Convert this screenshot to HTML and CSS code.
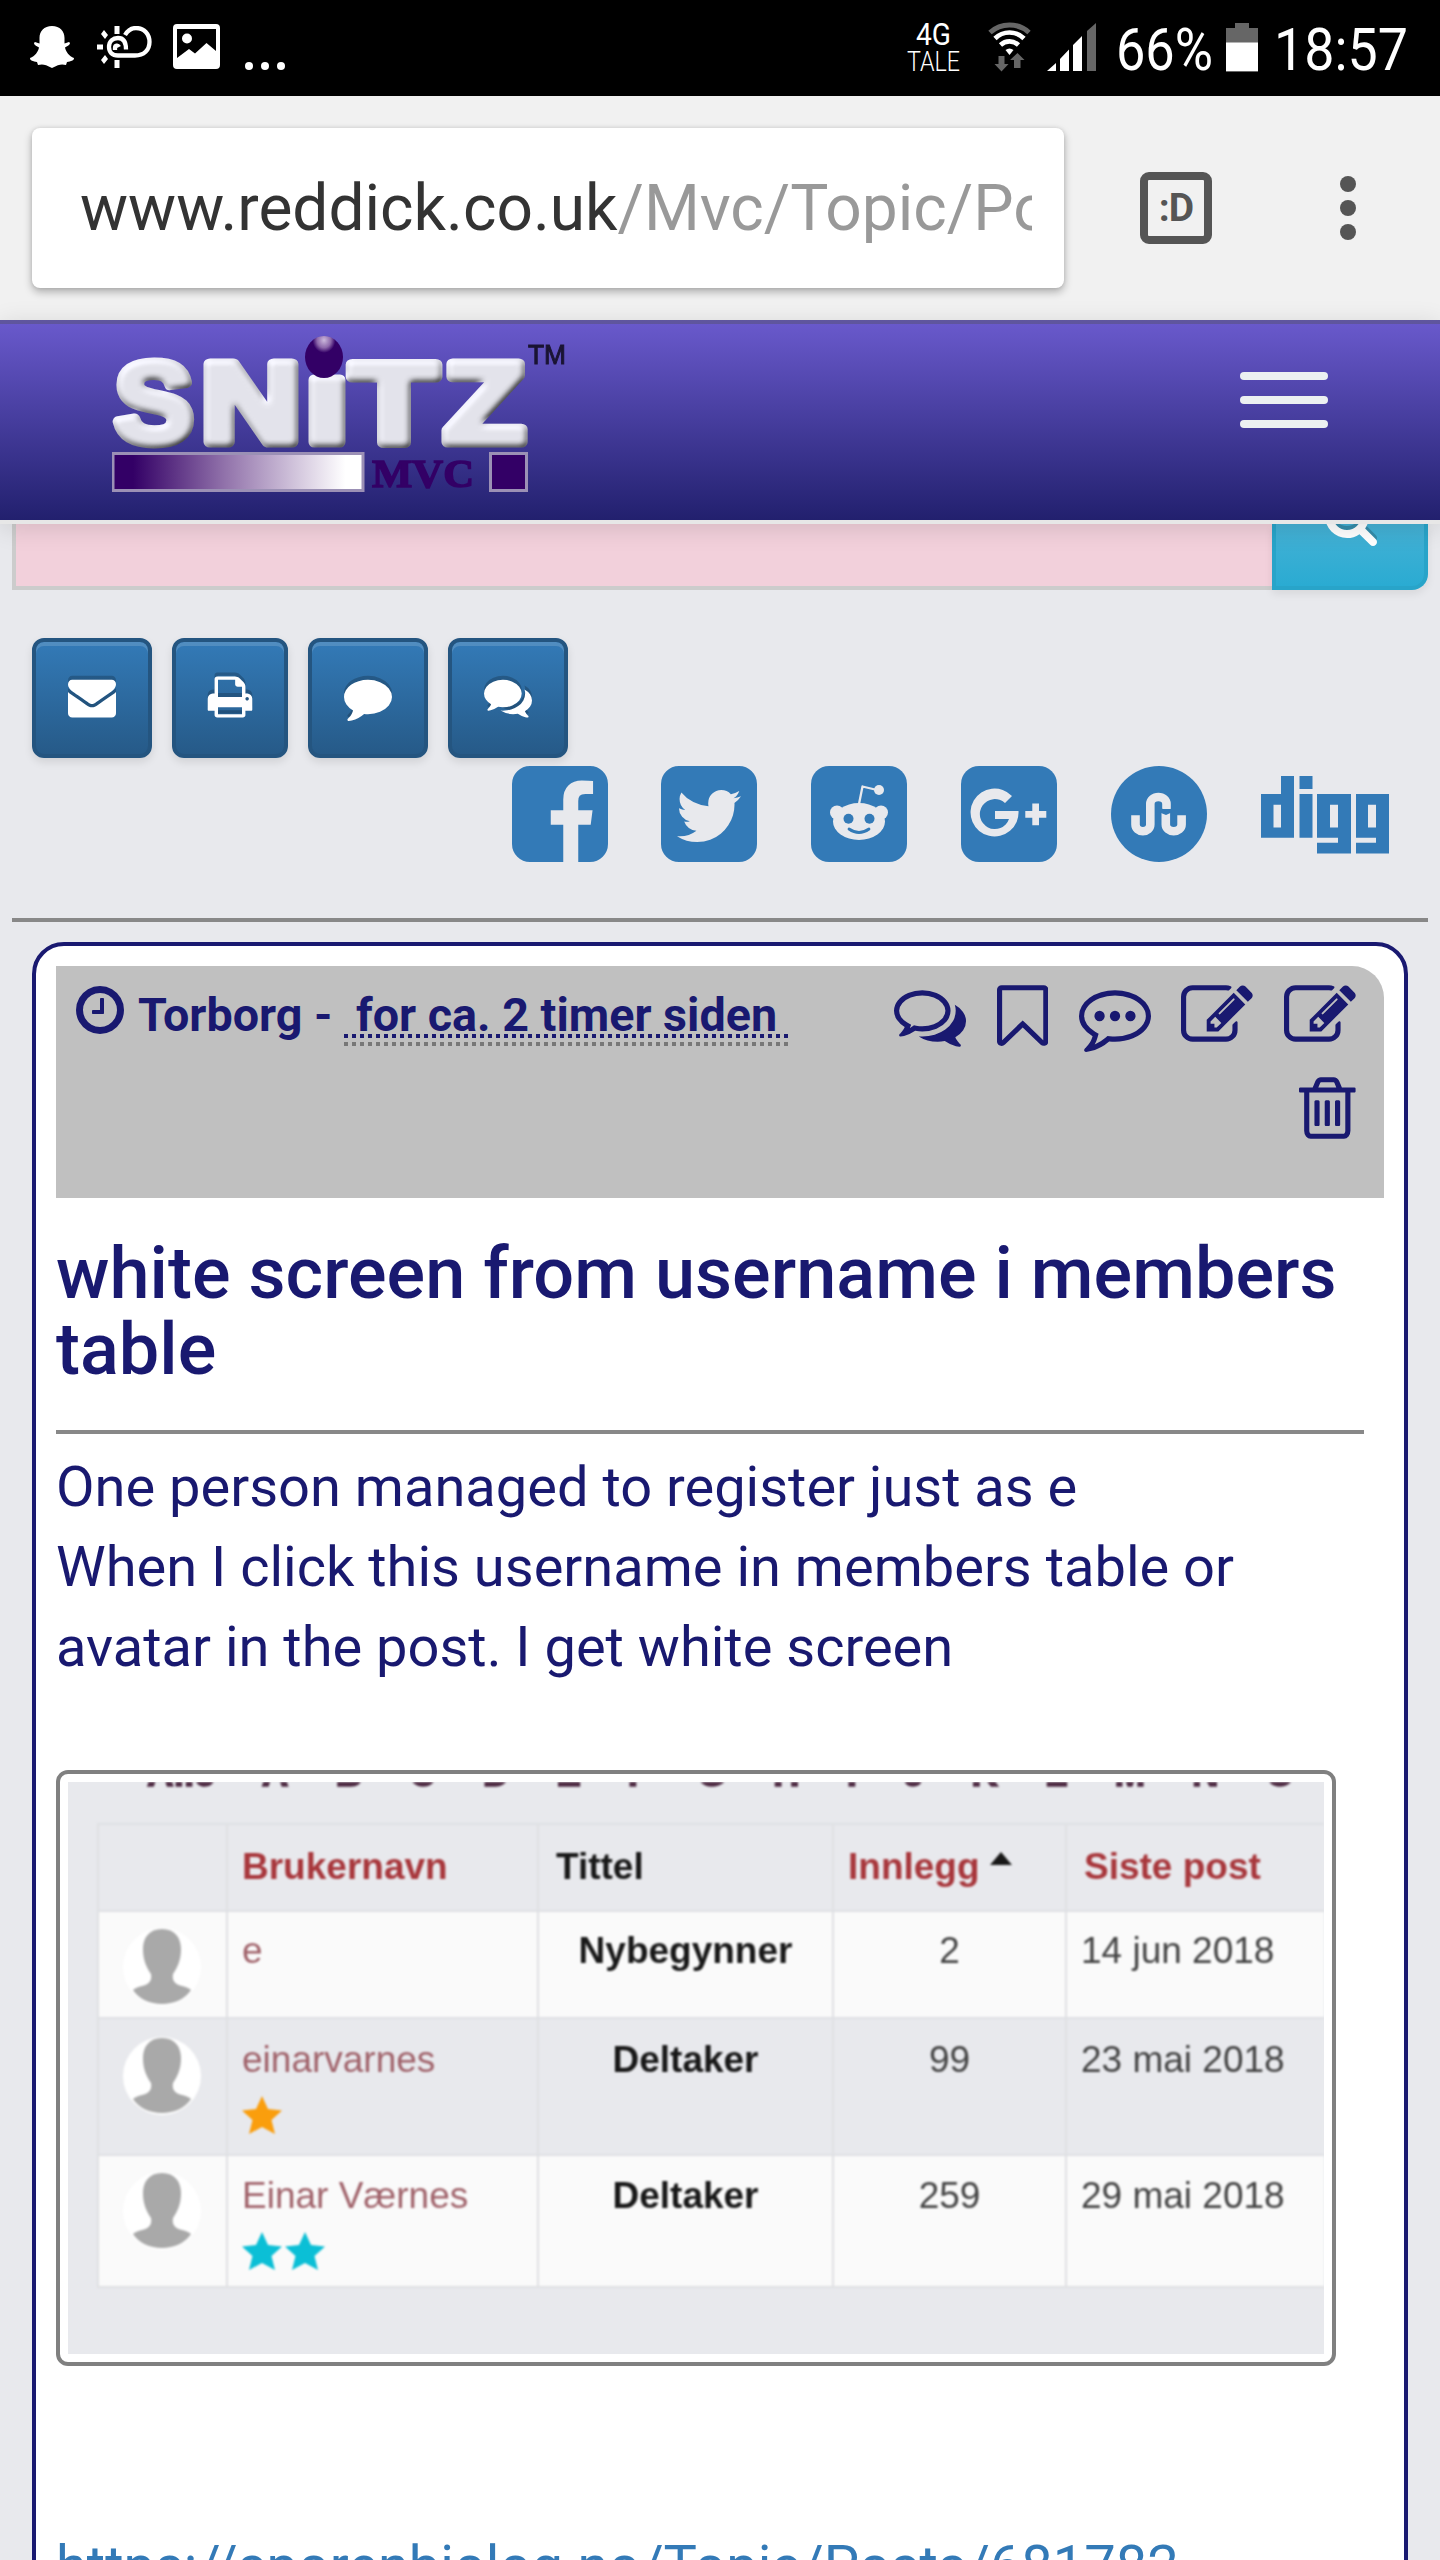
FILE: index.html
```html
<!DOCTYPE html>
<html lang="no">
<head>
<meta charset="utf-8">
<title>Snitz MVC</title>
<link rel="stylesheet" href="styles.css">
</head>
<body>
<div class="status">
  <svg class="st-ghost" viewBox="0 0 44 42" fill="#fff"><path d="M22 0C30 0 34.500 5 34.500 12V17.500L39 16C41 17 40 19 35 21.500C36 26 39 30 44 32C44 35 41 35 37 36L36 39C32 38 29 38 22 42C15 38 12 38 8 39L7 36C3 35 0 35 0 32C5 30 8 26 9 21.500C4 19 3 17 5 16L9.500 17.500V12C9.500 5 14 0 22 0Z"/></svg>
  <svg class="st-weather" viewBox="0 0 55 42"><path d="M28 9C31 4 35 2 39 2C47 2 52.500 8 52.500 16C52.500 24 47 29.500 38 29.500H21C15 29.500 12 26 12 21C12 15 16 12 21 12C26 12 29 16 29 23.500M18 24V22C18 19 21 19 22 21" fill="none" stroke="#fff" stroke-width="4.300"/><path fill="#fff" d="M17.500 0h5v8h-5zM0 18.500h6v5H0zM17.500 34h5v8h-5zM4 8l3-4 4 5-3 4zM4 34l4-5 3 4-4 5z"/></svg>
  <svg class="st-picture" viewBox="0 0 47 45"><path fill="#fff" fill-rule="evenodd" d="M4 0H43Q47 0 47 4V41Q47 45 43 45H4Q0 45 0 41V4Q0 0 4 0ZM4 5V34L16 25L22 29.500L33.500 19L43 27V5Z"/><circle cx="14" cy="14.500" r="5" fill="#fff"/></svg>
  <svg class="st-more" viewBox="0 0 40 8" fill="#fff"><circle cx="4" cy="4" r="4"/><circle cx="20" cy="4" r="4"/><circle cx="36" cy="4" r="4"/></svg>
  <svg class="st-net" viewBox="0 0 54 52" fill="#fff"><text x="9" y="23.500" font-size="31" textLength="35" lengthAdjust="spacingAndGlyphs">4G</text><text x="0" y="50" font-size="27" font-weight="300" textLength="53" lengthAdjust="spacingAndGlyphs">TALE</text></svg>
  <svg class="st-wifi" viewBox="0 0 43 49" fill="none"><path d="M2 10.500A29 29 0 0 1 41 10.500" stroke="#666" stroke-width="5"/><path d="M7 16.500A20.500 20.500 0 0 1 36 16.500M12.500 23A13 13 0 0 1 30.500 23" stroke="#fff" stroke-width="4.600"/><path d="M17.500 28Q21.500 25 25.500 28L21.500 33Z" fill="#fff"/><path fill="#666" d="M10.500 34h6v8h4L13.500 49.500 6.500 42h4zM26 46v-8h-4L29.500 31 36.500 38h-4v8z"/></svg>
  <svg class="st-signal" viewBox="0 0 49 48"><path fill="#fff" d="M0 48L9 40V48ZM13 48V36L22 26.500V48ZM26 48V22L35 13V48Z"/><path fill="#666" d="M40 48V8L49 0V48Z"/></svg>
  <svg class="st-pct" viewBox="0 0 94 52" fill="#fff"><text x="-2" y="47" font-size="60" textLength="97" lengthAdjust="spacingAndGlyphs">66%</text></svg>
  <svg class="st-batt" viewBox="0 0 32 49"><path fill="#666" d="M9 0H23V5H32V49H0V5H9Z"/><path fill="#fff" d="M0 19.500H32V48H0Z"/></svg>
  <svg class="st-time" viewBox="0 0 132 52" fill="#fff"><text x="-3" y="47" font-size="60" textLength="134" lengthAdjust="spacingAndGlyphs">18:57</text></svg>
</div>
<div class="browser">
  <div class="url"><div class="url-text">www.reddick.co.uk<span>/Mvc/Topic/Posts</span></div></div>
  <div class="tabs">:D</div>
  <div class="dots"><i></i><i></i><i></i></div>
</div>
<header class="navbar">
  <svg class="logo" viewBox="0 0 456 160">
    <defs>
      <linearGradient id="fade"><stop offset="0" stop-color="#330066"/><stop offset=".08" stop-color="#330066"/><stop offset=".45" stop-color="#9273ab"/><stop offset=".93" stop-color="#fff"/></linearGradient>
      <radialGradient id="ball" cx=".5" cy=".1" r=".6"><stop offset="0" stop-color="#cbb8dc"/><stop offset=".3" stop-color="#8d68ab"/><stop offset=".5" stop-color="#330066"/></radialGradient>
      <filter id="bevel" x="-5%" y="-5%" width="110%" height="115%"><feGaussianBlur in="SourceAlpha" stdDeviation="3" result="b"/><feDiffuseLighting in="b" surfaceScale="5" diffuseConstant="1.120" lighting-color="#ececf4" result="d"><feDistantLight azimuth="240" elevation="55"/></feDiffuseLighting><feComposite in="d" in2="SourceAlpha" operator="in"/></filter>
    </defs>
    <g class="letters" fill="#fff" stroke="#fff" stroke-width="11" stroke-linejoin="round" filter="url(#bevel)">
      <text x="3" y="106" font-size="113" textLength="78" lengthAdjust="spacingAndGlyphs">S</text>
      <text x="89" y="106" font-size="113" textLength="100" lengthAdjust="spacingAndGlyphs">N</text>
      <path d="M202 44H228V106H202Z"/>
      <text x="239" y="106" font-size="113" textLength="86" lengthAdjust="spacingAndGlyphs">T</text>
      <text x="332" y="106" font-size="113" textLength="81" lengthAdjust="spacingAndGlyphs">Z</text>
    </g>
    <ellipse cx="212" cy="21" rx="19" ry="21" fill="url(#ball)"/>
    <rect x="1" y="117.500" width="250" height="37" fill="url(#fade)" stroke="#9b90b5" stroke-width="3"/>
    <text class="mvc" x="260" y="151" font-size="41" textLength="102" lengthAdjust="spacingAndGlyphs">MVC</text>
    <rect x="378.500" y="117.500" width="36" height="37" fill="#330066" stroke="#9b90b5" stroke-width="3"/>
    <text x="416" y="28" font-size="28" textLength="38" lengthAdjust="spacingAndGlyphs" fill="#1a1433" stroke="#1a1433">TM</text>
  </svg>
  <div class="burger"><i></i><i></i><i></i></div>
</header>
<main>
  <div class="search">
    <div class="field"></div>
    <div class="go"><svg viewBox="64 128 1664 1664"><path fill="#fff" d="M1216 832q0-185-131.500-316.500t-316.500-131.500-316.500 131.500-131.500 316.500 131.500 316.500 316.500 131.500 316.500-131.500 131.500-316.500zm512 832q0 52-38 90t-90 38q-54 0-90-38l-343-342q-179 124-399 124-143 0-273.500-55.500t-225-150-150-225-55.500-273.500 55.500-273.500 150-225 225-150 273.500-55.500 273.500 55.500 225 150 150 225 55.500 273.500q0 220-124 399l343 343q37 37 37 90z"/></svg></div>
  </div>
  <div class="tools">
    <div class="btn"><svg viewBox="0 0 1792 1792"><path d="M1792 710v794q0 66-47 113t-113 47h-1472q-66 0-113-47t-47-113v-794q44 49 101 87 362 246 497 345 57 42 92.500 65.500t94.500 48 110 24.500h2q51 0 110-24.500t94.500-48 92.500-65.500q170-123 498-345 57-39 100-87zm0-294q0 79-49 151t-122 123q-376 261-468 325-10 7-42.500 31t-54 38.500-52 32.500-57.500 27-50 9h-2q-23 0-50-9t-57.500-27-52-32.500-54-38.500-42.500-31q-91-64-262-182.500t-205-142.500q-62-42-117-115.500t-55-136.500q0-78 41.500-130t118.500-52h1472q65 0 112.500 47t47.500 113z"/></svg></div>
    <div class="btn narrow"><svg viewBox="0 0 1792 1792"><path d="M448 1536h896v-256h-896v256zm0-640h896v-384h-160q-40 0-68-28t-28-68v-160h-640v640zm1152 64q0-26-19-45t-45-19-45 19-19 45 19 45 45 19 45-19 19-45zm128 0v416q0 13-9.500 22.500t-22.500 9.500h-224v160q0 40-28 68t-68 28h-960q-40 0-68-28t-28-68v-160h-224q-13 0-22.500-9.500t-9.500-22.500v-416q0-79 56.500-135.500t135.500-56.500h64v-544q0-40 28-68t68-28h672q40 0 88 20t76 48l152 152q28 28 48 76t20 88v256h64q79 0 135.500 56.500t56.500 135.500z"/></svg></div>
    <div class="btn"><svg viewBox="0 0 1792 1792"><path d="M1792 896q0 174-120 321.500t-326 233-450 85.500q-70 0-145-8-198 175-460 242-49 14-114 22-17 2-30.500-9t-17.500-29v-1q-3-4-.5-12t2-10 4.500-9.500l6-9 7-8.500 8-9q7-8 31-34.500t34.500-38 31-39.500 32.500-51 27-59 26-76q-157-89-247.500-220t-90.500-281q0-130 71-248.500t191-204.500 286-136.500 348-50.500q244 0 450 85.500t326 233 120 321.500z"/></svg></div>
    <div class="btn"><svg viewBox="0 0 1792 1792"><path d="M1408 768q0 139-94 257t-256.500 186.500-353.500 68.500q-86 0-176-16-124 88-278 128-36 9-86 16h-3q-11 0-20.500-8t-11.500-21q-1-3-1-6.500t.5-6.500 2-6l2.500-5 3.500-5.500 4-5 4.500-5 4-4.500q5-6 23-25t26-29.500 22.500-29 25-38.500 20.500-44q-124-72-195-177t-71-224q0-139 94-257t256.500-186.500 353.500-68.500 353.500 68.500 256.500 186.500 94 257zm384 256q0 120-71 224.500t-195 176.500q10 24 20.500 44t25 38.500 22.500 29 26 29.500 23 25q1 1 4 4.500t4.500 5 4 5 3.500 5.500l2.500 5 2 6 .5 6.500-1 6.500q-3 14-13 22t-22 7q-50-7-86-16-154-40-278-128-90 16-176 16-271 0-472-132 58 4 88 4 161 0 309-45t264-129q125-92 192-212t67-254q0-77-23-152 129 71 204 178t75 230z"/></svg></div>
  </div>
  <div class="social">
    <svg viewBox="128 128 1536 1536"><path d="M1376 128q119 0 203.500 84.500t84.500 203.500v960q0 119-84.500 203.500t-203.500 84.500h-188v-595h199l30-232h-229v-148q0-56 23.500-84t91.500-28l122-1v-207q-63-9-178-9-136 0-217.500 80t-81.500 226v171h-200v232h200v595h-532q-119 0-203.500-84.500t-84.500-203.500v-960q0-119 84.500-203.500t203.500-84.500h960z"/></svg>
    <svg viewBox="128 128 1536 1536"><path d="M1408 610q-56 25-121 34 68-40 93-117-65 38-134 51-61-66-153-66-87 0-148.500 61.500t-61.500 148.500q0 29 5 48-129-7-242-65t-192-155q-29 50-29 106 0 114 91 175-47-1-100-26v2q0 75 50 133.500t123 72.500q-29 8-51 8-13 0-39-4 21 63 74.500 104t121.500 42q-116 90-261 90-26 0-50-3 148 94 322 94 112 0 210-35.500t168-95 120.500-137 75-162 24.500-168.500q0-18-1-27 63-45 105-109zm256-194v960q0 119-84.500 203.500t-203.500 84.500h-960q-119 0-203.500-84.500t-84.500-203.500v-960q0-119 84.500-203.500t203.500-84.500h960q119 0 203.500 84.500t84.500 203.500z"/></svg>
    <svg viewBox="0 0 96 96"><rect width="96" height="96" rx="18"/><g class="cut"><ellipse cx="48" cy="55.500" rx="26" ry="18.500"/><circle cx="26" cy="46.500" r="7"/><circle cx="70" cy="46.500" r="7"/><circle cx="68" cy="24" r="5"/></g><path d="M48 38L51.500 20.500L66 24" fill="none" stroke="#e8e9ed" stroke-width="2.300" stroke-linejoin="round"/><circle cx="37.500" cy="52.700" r="5"/><circle cx="58.500" cy="52.700" r="5"/><path d="M38 63Q48 70 58 63" fill="none" stroke="#337ab7" stroke-width="2.800" stroke-linecap="round"/></svg>
    <svg viewBox="0 0 96 96"><rect width="96" height="96" rx="18"/><path class="cut" d="M51 30L44 37A15 15 0 1 0 48 53H34V45H57.500A24 24 0 1 1 51 30ZM71.300 37.500h6.700v7.500h7.300v6.700h-7.300v7.500h-6.700v-7.500h-7v-6.700h7z"/></svg>
    <svg viewBox="0 0 96 96"><circle cx="48" cy="48" r="48"/><path d="M24.500 49.300V58.500a7.400 6.700 0 0 0 14.800 0V38a8.100 7 0 0 1 16.200 0V43M54.800 46V58.500a7.900 6.700 0 0 0 15.800 0V49.300" fill="none" stroke="#e8e9ed" stroke-width="8.600"/><path d="M50 42l5.500 3 5-2.500v4l-5.500 2.500-5-2z"/></svg>
    <svg class="digg" viewBox="0 0 128 78"><path fill-rule="evenodd" d="M20 0H33V61.700H0V18H20ZM12.500 28.700V51.500H20V28.700ZM38.500 0h13v13h-13zM38.500 18h13v43.700h-13zM56 18H90V77.500H56V66.700H77V61.700H56ZM69 28.700V51.500H77V28.700ZM95 18H128V77.500H95V66.700H115V61.700H95ZM107 28.700V51.500H115V28.700Z"/></svg>
  </div>
  <hr class="rule">
  <article class="post">
    <div class="post-head">
      <div class="meta">
        <svg viewBox="128 128 1536 1536"><path d="M1024 544v448q0 14-9 23t-23 9h-320q-14 0-23-9t-9-23v-64q0-14 9-23t23-9h224v-352q0-14 9-23t23-9h64q14 0 23 9t9 23zm416 352q0-148-73-273t-198-198-273-73-273 73-198 198-73 273 73 273 198 198 273 73 273-73 198-198 73-273zm224 0q0 209-103 385.500t-279.500 279.500-385.500 103-385.500-103-279.500-279.500-103-385.500 103-385.500 279.500-279.500 385.500-103 385.500 103 279.500 279.500 103 385.500z"/></svg>
        <b class="author">Torborg -</b><b class="ago">for ca. 2 timer siden</b>
      </div>
      <div class="acts">
        <svg viewBox="0 0 1792 1792"><path d="M704 384q-153 0-286 52t-211.500 141-78.500 191q0 82 53 158t149 132l97 56-35 84q34-20 62-39l44-31 53 10q78 14 153 14 153 0 286-52t211.500-141 78.500-191-78.500-191-211.500-141-286-52zm0-128q191 0 353.500 68.500t256.500 186.500 94 257-94 257-256.500 186.500-353.500 68.500q-86 0-176-16-124 88-278 128-36 9-86 16h-3q-11 0-20.500-8t-11.500-21q-1-3-1-6.500t.5-6.500 2-6l2.500-5 3.500-5.500 4-5 4.500-5 4-4.500q5-6 23-25t26-29.500 22.500-29 25-38.500 20.500-44q-124-72-195-177t-71-224q0-139 94-257t256.500-186.500 353.500-68.500zm822 1169q10 24 20.500 44t25 38.500 22.500 29 26 29.500 23 25q1 1 4 4.500t4.500 5 4 5 3.500 5.500l2.500 5 2 6 .5 6.500-1 6.500q-3 14-13 22t-22 7q-50-7-86-16-154-40-278-128-90 16-176 16-271 0-472-132 58 4 88 4 161 0 309-45t264-129q125-92 192-212t67-254q0-77-23-152 129 71 204 178t75 230q0 120-71 224.500t-195 176.500z"/></svg>
        <svg class="w-mark" viewBox="256 0 1280 1792"><path d="M1408 256h-1024v1242l423-406 89-85 89 85 423 406v-1242zm12-128q23 0 44 9 33 13 52.500 41t19.500 62v1289q0 34-19.500 62t-52.500 41q-19 8-44 8-48 0-83-32l-441-424-441 424q-36 33-83 33-23 0-44-9-33-13-52.500-41t-19.500-62v-1289q0-34 19.500-62t52.500-41q21-9 44-9h1048z"/></svg>
        <svg viewBox="0 0 1792 1792"><path d="M640 896q0 53-37.500 90.500t-90.500 37.500-90.500-37.500-37.500-90.500 37.500-90.500 90.500-37.500 90.500 37.500 37.500 90.500zm384 0q0 53-37.500 90.500t-90.500 37.500-90.500-37.500-37.500-90.500 37.500-90.500 90.500-37.500 90.500 37.500 37.500 90.500zm384 0q0 53-37.500 90.500t-90.500 37.500-90.500-37.500-37.500-90.500 37.500-90.500 90.500-37.500 90.500 37.500 37.500 90.500zm-512-512q-204 0-381.500 69.500t-282 187.500-104.500 255q0 112 71.500 213.500t201.500 175.500l87 50-27 96q-24 91-70 172 152-63 275-171l43-38 57 6q69 8 130 8 204 0 381.500-69.500t282-187.500 104.500-255-104.500-255-282-187.500-381.500-69.500zm896 512q0 174-120 321.500t-326 233-450 85.500q-70 0-145-8-198 175-460 242-49 14-114 22h-5q-15 0-27-10.500t-16-27.500v-1q-3-4-.5-12t2-10 4.500-9.500l6-9 7-8.500 8-9q7-8 31-34.500t34.500-38 31-39.500 32.500-51 27-59 26-76q-157-89-247.500-220t-90.500-281q0-130 71-248.500t191-204.500 286-136.500 348-50.500 348 50.500 286 136.500 191 204.500 71 248.500z"/></svg>
        <svg viewBox="0 0 1792 1792"><path d="M888 1184l116-116-152-152-116 116v56h96v96h56zm440-720q-16-16-33 1l-350 350q-17 17-1 33t33-1l350-350q17-17 1-33zm80 594v190q0 119-84.500 203.500t-203.500 84.500h-832q-119 0-203.500-84.500t-84.500-203.500v-832q0-119 84.500-203.500t203.500-84.500h832q63 0 117 25 15 7 18 23 3 17-9 29l-49 49q-14 14-32 8-23-6-45-6h-832q-66 0-113 47t-47 113v832q0 66 47 113t113 47h832q66 0 113-47t47-113v-126q0-13 9-22l64-64q15-15 35-7t20 29zm-96-738l288 288-672 672h-288v-288zm444 132l-92 92-288-288 92-92q28-28 68-28t68 28l152 152q28 28 28 68t-28 68z"/></svg>
        <svg viewBox="0 0 1792 1792"><path d="M888 1184l116-116-152-152-116 116v56h96v96h56zm440-720q-16-16-33 1l-350 350q-17 17-1 33t33-1l350-350q17-17 1-33zm80 594v190q0 119-84.500 203.500t-203.500 84.500h-832q-119 0-203.500-84.500t-84.500-203.500v-832q0-119 84.500-203.500t203.500-84.500h832q63 0 117 25 15 7 18 23 3 17-9 29l-49 49q-14 14-32 8-23-6-45-6h-832q-66 0-113 47t-47 113v832q0 66 47 113t113 47h832q66 0 113-47t47-113v-126q0-13 9-22l64-64q15-15 35-7t20 29zm-96-738l288 288-672 672h-288v-288zm444 132l-92 92-288-288 92-92q28-28 68-28t68 28l152 152q28 28 28 68t-28 68z"/></svg>
        <svg class="w-trash" viewBox="192 0 1408 1792"><path d="M704 736v576q0 14-9 23t-23 9h-64q-14 0-23-9t-9-23v-576q0-14 9-23t23-9h64q14 0 23 9t9 23zm256 0v576q0 14-9 23t-23 9h-64q-14 0-23-9t-9-23v-576q0-14 9-23t23-9h64q14 0 23 9t9 23zm256 0v576q0 14-9 23t-23 9h-64q-14 0-23-9t-9-23v-576q0-14 9-23t23-9h64q14 0 23 9t9 23zm128 724v-948h-896v948q0 22 7 40.500t14.500 27 10.500 8.500h832q3 0 10.500-8.500t14.500-27 7-40.500zm-672-1076h448l-48-117q-7-9-17-11h-317q-10 2-17 11zm928 32v64q0 14-9 23t-23 9h-96v948q0 83-47 143.500t-113 60.500h-832q-66 0-113-58.500t-47-141.500v-952h-96q-14 0-23-9t-9-23v-64q0-14 9-23t23-9h309l70-167q15-37 54-63t79-26h320q40 0 79 26t54 63l70 167h309q14 0 23 9t9 23z"/></svg>
      </div>
    </div>
    <h1>white screen from username i members<br>table</h1>
    <hr class="inner">
    <p>One person managed to register just as e<br>When I click this username in members table or<br>avatar in the post. I get white screen</p>
    <div class="shot"><div class="pic">
      <div class="alpha"><span>Alle</span><span>A</span><span>B</span><span>C</span><span>D</span><span>E</span><span>F</span><span>G</span><span>H</span><span>I</span><span>J</span><span>K</span><span>L</span><span>M</span><span>N</span><span>O</span></div>
      <div class="grid">
        <div class="row head"><div></div><div class="red">Brukernavn</div><div>Tittel</div><div class="red sort">Innlegg<svg viewBox="0 0 22 13"><path d="M11 0L22 13H0Z"/></svg></div><div class="red">Siste post</div></div>
        <div class="row r1"><div class="av"><svg viewBox="0 0 80 80"><circle cx="40" cy="41" r="39" fill="#fff"/><path d="M40 3C53 3 59 12 59 23C59 35 55 42 51 48C50 54 52 58 60 60C64 61 67 62 69 64C63 73 52 78 40 78C28 78 17 73 11 64C13 62 16 61 20 60C28 58 30 54 29 48C25 42 21 35 21 23C21 12 27 3 40 3Z"/></svg></div><div class="name">e</div><div class="rank">Nybegynner</div><div class="num">2</div><div>14 jun 2018</div></div>
        <div class="row r2"><div class="av"><svg viewBox="0 0 80 80"><circle cx="40" cy="41" r="39" fill="#fff"/><path d="M40 3C53 3 59 12 59 23C59 35 55 42 51 48C50 54 52 58 60 60C64 61 67 62 69 64C63 73 52 78 40 78C28 78 17 73 11 64C13 62 16 61 20 60C28 58 30 54 29 48C25 42 21 35 21 23C21 12 27 3 40 3Z"/></svg></div><div class="name">einarvarnes<div class="stars gold"><svg viewBox="0 0 40 38"><path d="M20 0L26 13L40 14.500L29.500 24L33 38L20 31L7 38L10.500 24L0 14.500L14 13Z"/></svg></div></div><div class="rank">Deltaker</div><div class="num">99</div><div>23 mai 2018</div></div>
        <div class="row r3"><div class="av"><svg viewBox="0 0 80 80"><circle cx="40" cy="41" r="39" fill="#fff"/><path d="M40 3C53 3 59 12 59 23C59 35 55 42 51 48C50 54 52 58 60 60C64 61 67 62 69 64C63 73 52 78 40 78C28 78 17 73 11 64C13 62 16 61 20 60C28 58 30 54 29 48C25 42 21 35 21 23C21 12 27 3 40 3Z"/></svg></div><div class="name">Einar Værnes<div class="stars"><svg viewBox="0 0 40 38"><path d="M20 0L26 13L40 14.500L29.500 24L33 38L20 31L7 38L10.500 24L0 14.500L14 13Z"/></svg><svg viewBox="0 0 40 38"><path d="M20 0L26 13L40 14.500L29.500 24L33 38L20 31L7 38L10.500 24L0 14.500L14 13Z"/></svg></div></div><div class="rank">Deltaker</div><div class="num">259</div><div>29 mai 2018</div></div>
      </div>
    </div></div>
    <a class="link">https://sporenbiolog.no/Topic/Posts/681782</a>
  </article>
</main>
</body>
</html>
```
FILE: styles.css
```css
* { box-sizing: border-box; }
html, body { margin: 0; height: 2560px; overflow: hidden; }
body { width: 1440px; background: #e8e9ed; font-family: Roboto, sans-serif; color: #191970; }
svg { display: block; flex: none; }

/* phone status bar */
.status { height: 96px; background: #000; display: flex; align-items: flex-start; padding-left: 30px; }
.st-ghost { width: 44px; height: 42px; margin-top: 26px; }
.st-weather { width: 55px; height: 42px; margin: 26px 0 0 23px; }
.st-picture { width: 47px; height: 45px; margin: 24px 0 0 21px; }
.st-more { width: 40px; height: 8px; margin: 61.500px 0 0 25px; }
.st-net { width: 54px; height: 52px; margin: 21px 0 0 622px; overflow: visible; }
.st-wifi { width: 43px; height: 49px; margin: 22px 0 0 27px; overflow: visible; }
.st-signal { width: 49px; height: 48px; margin: 23px 0 0 16px; }
.st-pct { width: 94px; height: 52px; margin: 23px 0 0 22px; overflow: visible; }
.st-batt { width: 32px; height: 49px; margin: 23px 0 0 14px; }
.st-time { width: 132px; height: 52px; margin: 23px 0 0 19px; overflow: visible; }

/* browser bar */
.browser { height: 224px; background: #f1f1f1; display: flex; align-items: center; padding: 0 84px 0 32px; }
.url { width: 1032px; height: 160px; background: #fff; border-radius: 8px; box-shadow: 0 4px 8px rgba(0,0,0,.28), 0 0 4px rgba(0,0,0,.1); padding: 0 32px 0 48px; }
.url-text { overflow: hidden; white-space: nowrap; font-size: 64px; height: 160px; line-height: 162px; color: #333; }
.url-text span { color: #999; }
.tabs { width: 72px; height: 72px; margin-left: 76px; border: 8px solid #555; border-radius: 9px; font-weight: 700; font-size: 39px; line-height: 56px; text-align: center; color: #555; letter-spacing: -1px; }
.dots { margin-left: 128px; display: flex; flex-direction: column; gap: 8px; }
.dots i { width: 16px; height: 16px; border-radius: 50%; background: #555; }

/* site header */
.navbar { position: relative; z-index: 2; height: 204px; border-bottom: 4px solid #e7e7e7; background: linear-gradient(#6a5acd, #22206e); box-shadow: inset 0 4px 0 rgba(80,80,90,.4), 0 4px 24px rgba(0,0,0,.12); display: flex; align-items: flex-start; justify-content: space-between; padding: 16px 112px 0 112px; }
.logo { width: 456px; height: 160px; font-family: "Liberation Sans", sans-serif; filter: blur(.7px); }
.letters { font-weight: 700; }
.mvc { font-family: "Liberation Serif", serif; font-weight: 700; fill: #330066; stroke: #330066; stroke-width: 1.500; }
.burger { width: 88px; margin-top: 36px; display: flex; flex-direction: column; gap: 16px; }
.burger i { height: 8px; border-radius: 4px; background: #ecf0f1; }

/* search */
.search { height: 66px; margin: 0 12px; display: flex; }
.field { flex: 1; background: #f2d0db; border: 4px solid #ccc; border-width: 0 0 4px 4px; }
.go { width: 156px; background: linear-gradient(#45b1d5, #2aabd2); border: 4px solid #28a4c9; border-top: 0; border-bottom-right-radius: 16px; box-shadow: 0 4px 8px rgba(0,0,0,.075); }
.go svg { width: 52px; height: 52px; margin: -30px 0 0 49px; filter: drop-shadow(0 -4px 0 rgba(0,0,0,.2)); }

.tools { margin: 48px 0 0 32px; display: flex; gap: 20px; }
.btn { width: 120px; height: 120px; border: 4px solid #245580; border-radius: 12px; background: linear-gradient(#337ab7, #265a88); box-shadow: inset 0 4px 0 rgba(255,255,255,.15), 0 4px 8px rgba(0,0,0,.1); display: flex; align-items: center; justify-content: center; }
.btn.narrow { width: 116px; }
.btn svg { width: 48px; height: 48px; margin-bottom: 2px; fill: #fff; overflow: visible; filter: drop-shadow(0 -4px 0 rgba(0,0,0,.2)); }

.social { margin-top: 8px; padding-right: 51.500px; display: flex; justify-content: flex-end; gap: 53.800px; height: 96px; }
.social svg { width: 96px; height: 96px; fill: #337ab7; }
.social .cut { fill: #e8e9ed; }
.social .digg { width: 128px; height: 78px; margin-top: 9.500px; }

hr { border: 0; height: 4px; background: #888; }
.rule { margin: 56px 12px 0; }

/* post */
.post { margin: 20px 32px 0; height: 1700px; background: #fff; border: 4px solid #191970; border-radius: 32px; padding: 20px; }
.post-head { height: 232px; background: silver; border-top-right-radius: 32px; display: flex; justify-content: space-between; padding: 13.500px 28px 0 20px; }
.meta { display: flex; height: 70px; padding-top: 6.500px; font-size: 46.700px; line-height: 52px; white-space: nowrap; }
.meta svg { width: 48px; height: 48px; fill: #191970; }
.meta b { height: 53px; margin-top: 3px; }
.author { margin-left: 14px; width: 206px; font-weight: 700; }
.ago { width: 444px; padding-left: 12px; position: relative; }
.ago::before, .ago::after { content: ""; position: absolute; left: 0; right: 0; height: 4px; }
.ago::before { top: 45px; background: repeating-linear-gradient(90deg, #191970 0 4px, transparent 4px 8px); }
.ago::after { top: 53px; background: repeating-linear-gradient(90deg, #777 0 4px, transparent 4px 8px); }
.acts { width: 470px; display: flex; flex-wrap: wrap; justify-content: flex-end; align-content: flex-start; gap: 20px 30.700px; }
.acts svg { width: 72px; height: 72px; fill: #191970; }
.acts .w-mark { width: 51.400px; }
.acts .w-trash { width: 56.600px; }
h1 { margin: 38px 0 0; font-size: 72px; line-height: 76px; font-weight: 500; white-space: nowrap; letter-spacing: .04px; }
.inner { margin: 42px 20px 0 0; }
p { margin: 13px 0 0; font-size: 56px; line-height: 80px; white-space: nowrap; }

/* picture in the post */
.shot { width: 1280px; height: 596px; margin-top: 83px; border: 4px solid gray; border-radius: 12px; padding: 8px; }
.pic { height: 572px; background: #e8e9ed; overflow: hidden; font: 37px/40px "Liberation Sans", sans-serif; color: #444; }
.alpha { height: 41px; padding-left: 79px; display: flex; gap: 46.900px; overflow: hidden; font-weight: 700; color: #4c2840; filter: blur(1px); line-height: 37px; -webkit-text-stroke: 1.500px #4c2840; }
.alpha span { margin-top: -27px; }
.grid { margin-left: 29px; filter: blur(.9px); }
.row { display: grid; grid-template-columns: 129px 311px 295px 233px 1fr; border-top: 2px solid #dfe0e4; background: #fafafa; }
.row > div { border-left: 2px solid #e0e0e3; padding: 19px 0 0 14px; white-space: nowrap; }
.row .av { padding: 14px 0 0 23px; }
.av svg { width: 80px; height: 80px; fill: #a9a9a9; }
.head { height: 87px; font-weight: 700; color: #181818; }
.row.head, .row.r2 { background: #e8e9ed; }
.row.head > div { padding-top: 22px; padding-left: 17px; }
.row.head > div.red { padding-left: 14px; color: #a8373c; }
.row.head > div:last-child { padding-left: 17px; }
.head .sort { display: flex; gap: 10px; }
.sort svg { width: 22px; height: 13px; margin-top: 5px; fill: #181818; }
.r1 { height: 107px; }
.r2 { height: 137px; }
.row.r2 > div { padding-top: 21px; }
.row.r2 > .av { padding-top: 16px; }
.r3 { height: 134px; border-bottom: 2px solid #e0e0e3; }
.row.r3 > div { padding-top: 20px; }
.row.r3 > .av { padding-top: 14px; }
.row .name { color: #a0626a; }
.row .rank { font-weight: 700; color: #181818; text-align: center; padding-left: 0; }
.row .num { text-align: center; padding-left: 0; }
.stars { display: flex; gap: 3px; margin-top: 16px; }
.stars svg { width: 40px; height: 38px; fill: #0bbfd6; }
.gold svg { fill: #fa9e0d; }

.link { display: block; margin-top: 164px; font-size: 56px; line-height: 72px; color: #337ab7; white-space: nowrap; }
```
